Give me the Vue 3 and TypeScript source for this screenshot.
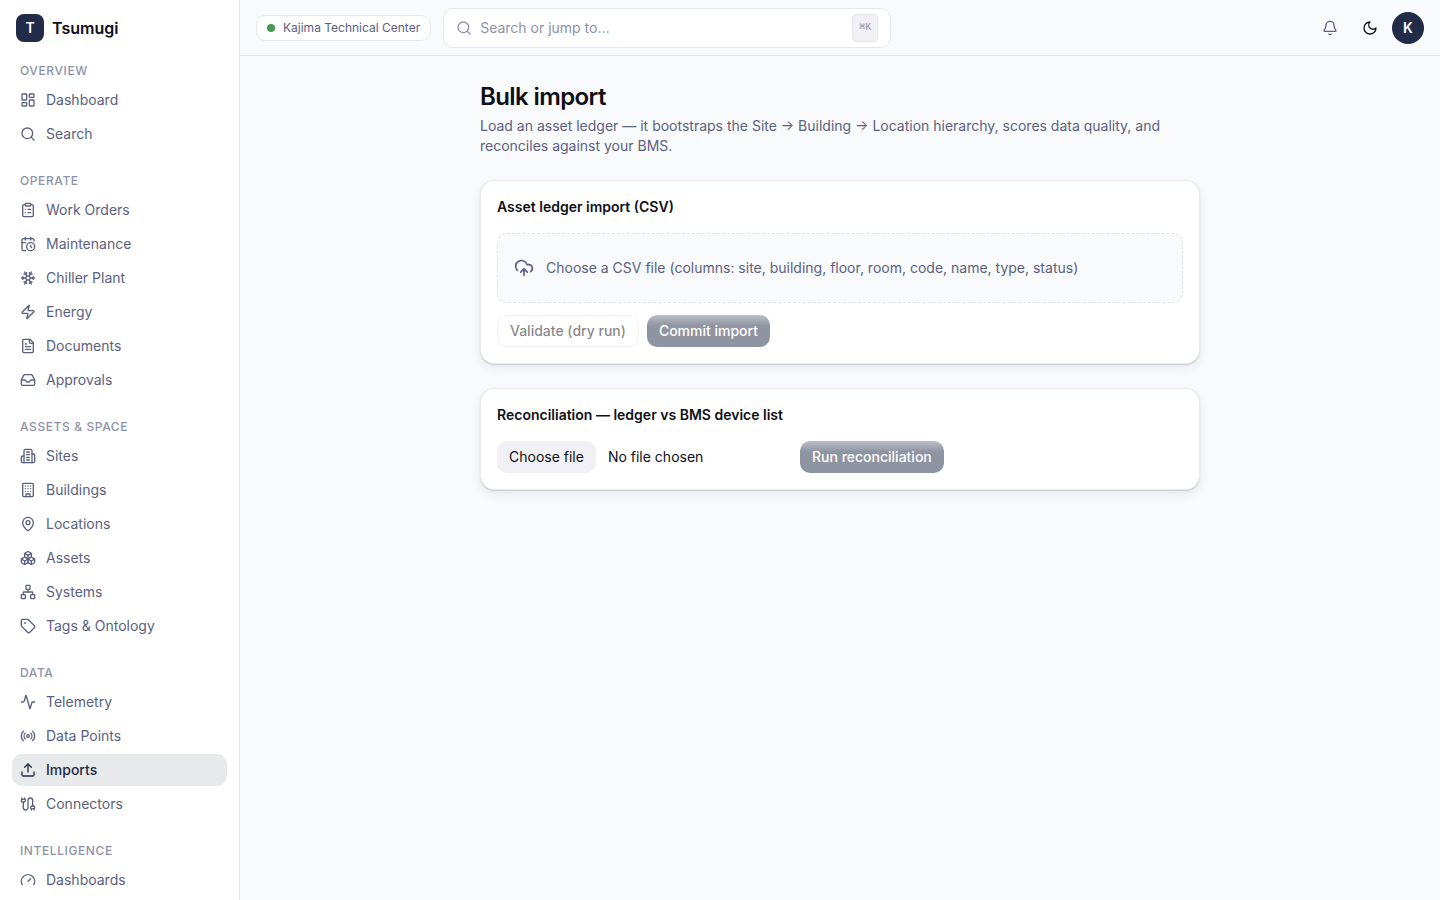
<script setup lang="ts">
import { ref } from 'vue'

interface NavItem {
  label: string
  icon: string
}
interface NavGroup {
  title: string
  items: NavItem[]
}

const groups: NavGroup[] = [
  {
    title: 'Overview',
    items: [
      { label: 'Dashboard', icon: 'dashboard' },
      { label: 'Search', icon: 'search' },
    ],
  },
  {
    title: 'Operate',
    items: [
      { label: 'Work Orders', icon: 'clipboard' },
      { label: 'Maintenance', icon: 'calendarClock' },
      { label: 'Chiller Plant', icon: 'snowflake' },
      { label: 'Energy', icon: 'zap' },
      { label: 'Documents', icon: 'fileText' },
      { label: 'Approvals', icon: 'inbox' },
    ],
  },
  {
    title: 'Assets & Space',
    items: [
      { label: 'Sites', icon: 'sites' },
      { label: 'Buildings', icon: 'building' },
      { label: 'Locations', icon: 'mapPin' },
      { label: 'Assets', icon: 'boxes' },
      { label: 'Systems', icon: 'network' },
      { label: 'Tags & Ontology', icon: 'tag' },
    ],
  },
  {
    title: 'Data',
    items: [
      { label: 'Telemetry', icon: 'activity' },
      { label: 'Data Points', icon: 'radio' },
      { label: 'Imports', icon: 'upload' },
      { label: 'Connectors', icon: 'cable' },
    ],
  },
  {
    title: 'Intelligence',
    items: [{ label: 'Dashboards', icon: 'gauge' }],
  },
]

const icons: Record<string, string[]> = {
  dashboard: [
    'M4 3h5a1 1 0 0 1 1 1v7a1 1 0 0 1-1 1H4a1 1 0 0 1-1-1V4a1 1 0 0 1 1-1z',
    'M15 3h5a1 1 0 0 1 1 1v3a1 1 0 0 1-1 1h-5a1 1 0 0 1-1-1V4a1 1 0 0 1 1-1z',
    'M15 12h5a1 1 0 0 1 1 1v7a1 1 0 0 1-1 1h-5a1 1 0 0 1-1-1v-7a1 1 0 0 1 1-1z',
    'M4 16h5a1 1 0 0 1 1 1v3a1 1 0 0 1-1 1H4a1 1 0 0 1-1-1v-3a1 1 0 0 1 1-1z',
  ],
  search: ['M19 11a8 8 0 1 1-16 0a8 8 0 1 1 16 0z', 'm21 21-4.34-4.34'],
  clipboard: [
    'M9 2h6a1 1 0 0 1 1 1v2a1 1 0 0 1-1 1H9a1 1 0 0 1-1-1V3a1 1 0 0 1 1-1z',
    'M16 4h2a2 2 0 0 1 2 2v14a2 2 0 0 1-2 2H6a2 2 0 0 1-2-2V6a2 2 0 0 1 2-2h2',
    'M12 11h4',
    'M12 16h4',
    'M8 11h.01',
    'M8 16h.01',
  ],
  calendarClock: [
    'M16 14v2.2l1.6 1',
    'M16 2v4',
    'M21 7.5V6a2 2 0 0 0-2-2H5a2 2 0 0 0-2 2v14a2 2 0 0 0 2 2h3.5',
    'M3 10h5',
    'M8 2v4',
    'M22 16a6 6 0 1 1-12 0a6 6 0 1 1 12 0z',
  ],
  snowflake: [
    'm10 20-1.25-2.5L6 18',
    'M10 4 8.75 6.5 6 6',
    'm14 20 1.25-2.5L18 18',
    'm14 4 1.25 2.5L18 6',
    'm17 21-3-6h-4',
    'm17 3-3 6 1.5 3',
    'M2 12h6.5L10 9',
    'm20 10-1.5 2 1.5 2',
    'M22 12h-6.5L14 15',
    'm4 10 1.5 2L4 14',
    'm7 21 3-6-1.5-3',
    'm7 3 3 6h4',
  ],
  zap: [
    'M4 14a1 1 0 0 1-.78-1.63l9.9-10.2a.5.5 0 0 1 .86.46l-1.92 6.02A1 1 0 0 0 13 10h7a1 1 0 0 1 .78 1.63l-9.9 10.2a.5.5 0 0 1-.86-.46l1.92-6.02A1 1 0 0 0 11 14z',
  ],
  fileText: [
    'M15 2H6a2 2 0 0 0-2 2v16a2 2 0 0 0 2 2h12a2 2 0 0 0 2-2V7Z',
    'M14 2v4a2 2 0 0 0 2 2h4',
    'M10 9H8',
    'M16 13H8',
    'M16 17H8',
  ],
  inbox: [
    'M22 12h-6l-2 3h-4l-2-3H2',
    'M5.45 5.11 2 12v6a2 2 0 0 0 2 2h16a2 2 0 0 0 2-2v-6l-3.45-6.89A2 2 0 0 0 16.76 4H7.24a2 2 0 0 0-1.79 1.11z',
  ],
  sites: [
    'M6 22V4a2 2 0 0 1 2-2h8a2 2 0 0 1 2 2v18Z',
    'M6 12H4a2 2 0 0 0-2 2v6a2 2 0 0 0 2 2h2',
    'M18 9h2a2 2 0 0 1 2 2v9a2 2 0 0 1-2 2h-2',
    'M10 6h4',
    'M10 10h4',
    'M10 14h4',
    'M10 18h4',
  ],
  building: [
    'M6 2h12a2 2 0 0 1 2 2v16a2 2 0 0 1-2 2H6a2 2 0 0 1-2-2V4a2 2 0 0 1 2-2z',
    'M9 22v-4h6v4',
    'M8 6h.01',
    'M16 6h.01',
    'M12 6h.01',
    'M12 10h.01',
    'M12 14h.01',
    'M16 10h.01',
    'M16 14h.01',
    'M8 10h.01',
    'M8 14h.01',
  ],
  mapPin: [
    'M20 10c0 4.993-5.539 10.193-7.399 11.799a1 1 0 0 1-1.202 0C9.539 20.193 4 14.993 4 10a8 8 0 0 1 16 0',
    'M15 10a3 3 0 1 1-6 0a3 3 0 1 1 6 0z',
  ],
  boxes: [
    'M2.97 12.92A2 2 0 0 0 2 14.63v3.24a2 2 0 0 0 .97 1.71l3 1.8a2 2 0 0 0 2.06 0L12 19v-5.5l-5-3-4.03 2.42Z',
    'm7 16.5-4.74-2.85',
    'm7 16.5 5-3',
    'M7 16.5v5.17',
    'M12 13.5V19l3.97 2.38a2 2 0 0 0 2.06 0l3-1.8a2 2 0 0 0 .97-1.71v-3.24a2 2 0 0 0-.97-1.71L17 10.5l-5 3Z',
    'm17 16.5-5-3',
    'm17 16.5 4.74-2.85',
    'M17 16.5v5.17',
    'M7.97 4.42A2 2 0 0 0 7 6.13v4.37l5 3 5-3V6.13a2 2 0 0 0-.97-1.71l-3-1.8a2 2 0 0 0-2.06 0l-3 1.8Z',
    'M12 8 7.26 5.15',
    'm12 8 4.74-2.85',
    'M12 13.5V8',
  ],
  network: [
    'M17 16h4a1 1 0 0 1 1 1v4a1 1 0 0 1-1 1h-4a1 1 0 0 1-1-1v-4a1 1 0 0 1 1-1z',
    'M3 16h4a1 1 0 0 1 1 1v4a1 1 0 0 1-1 1H3a1 1 0 0 1-1-1v-4a1 1 0 0 1 1-1z',
    'M10 2h4a1 1 0 0 1 1 1v4a1 1 0 0 1-1 1h-4a1 1 0 0 1-1-1V3a1 1 0 0 1 1-1z',
    'M5 16v-3a1 1 0 0 1 1-1h12a1 1 0 0 1 1 1v3',
    'M12 12V8',
  ],
  tag: [
    'M12.586 2.586A2 2 0 0 0 11.172 2H4a2 2 0 0 0-2 2v7.172a2 2 0 0 0 .586 1.414l8.704 8.704a2.426 2.426 0 0 0 3.42 0l6.58-6.58a2.426 2.426 0 0 0 0-3.42z',
    'M8 7.5a.5.5 0 1 1-1 0a.5.5 0 1 1 1 0z',
  ],
  activity: [
    'M22 12h-2.48a2 2 0 0 0-1.93 1.46l-2.35 8.36a.25.25 0 0 1-.48 0L9.24 2.18a.25.25 0 0 0-.48 0l-2.35 8.36A2 2 0 0 1 4.49 12H2',
  ],
  radio: [
    'M4.9 19.1C1 15.2 1 8.8 4.9 4.9',
    'M7.8 16.2c-2.3-2.3-2.3-6.1 0-8.5',
    'M14 12a2 2 0 1 1-4 0a2 2 0 1 1 4 0z',
    'M16.2 7.8c2.3 2.3 2.3 6.1 0 8.5',
    'M19.1 4.9C23 8.8 23 15.1 19.1 19',
  ],
  upload: ['M12 3v12', 'm17 8-5-5-5 5', 'M21 15v4a2 2 0 0 1-2 2H5a2 2 0 0 1-2-2v-4'],
  cable: [
    'M17 21v-2a1 1 0 0 1-1-1v-1a2 2 0 0 1 2-2h2a2 2 0 0 1 2 2v1a1 1 0 0 1-1 1',
    'M19 15V6.5a1 1 0 0 0-7 0v11a1 1 0 0 1-7 0V9',
    'M21 21v-2h-4',
    'M3 5h4V3',
    'M7 5a1 1 0 0 1 1 1v1a2 2 0 0 1-2 2H4a2 2 0 0 1-2-2V6a1 1 0 0 1 1-1V3',
  ],
  gauge: ['m12 14 4-4', 'M3.34 19a10 10 0 1 1 17.32 0'],
  bell: [
    'M10.268 21a2 2 0 0 0 3.464 0',
    'M3.262 15.326A1 1 0 0 0 4 17h16a1 1 0 0 0 .74-1.673C19.41 13.956 18 12.499 18 8A6 6 0 0 0 6 8c0 4.499-1.411 5.956-2.738 7.326',
  ],
  moon: ['M12 3a6 6 0 0 0 9 9 9 9 0 1 1-9-9Z'],
  cloudUpload: [
    'M12 13v8',
    'M4 14.899A7 7 0 1 1 15.71 8h1.79a4.5 4.5 0 0 1 2.5 8.242',
    'm8 17 4-4 4 4',
  ],
}

const activeItem = ref('Imports')
const query = ref('')
const deviceFile = ref('No file chosen')

function onDeviceFile(event: Event) {
  const files = (event.target as HTMLInputElement).files
  deviceFile.value = files?.[0]?.name ?? 'No file chosen'
}
</script>

<template>
  <div class="app">
    <aside class="sidebar">
      <div class="brand">
        <span class="brand-mark">T</span>
        <span class="brand-name">Tsumugi</span>
      </div>
      <nav class="nav" aria-label="Main">
        <section v-for="group in groups" :key="group.title" class="nav-group">
          <h2 class="nav-title">{{ group.title }}</h2>
          <a
            v-for="item in group.items"
            :key="item.label"
            href="#"
            class="nav-item"
            :class="{ active: item.label === activeItem }"
            @click.prevent="activeItem = item.label"
          >
            <svg class="icon" viewBox="0 0 24 24" aria-hidden="true">
              <path v-for="d in icons[item.icon]" :key="d" :d="d" />
            </svg>
            <span>{{ item.label }}</span>
          </a>
        </section>
      </nav>
    </aside>

    <div class="content">
      <header class="topbar">
        <button type="button" class="site-pill">
          <span class="dot"></span>
          Kajima Technical Center
        </button>
        <label class="search">
          <svg class="icon" viewBox="0 0 24 24" aria-hidden="true">
            <path v-for="d in icons.search" :key="d" :d="d" />
          </svg>
          <input v-model="query" type="text" placeholder="Search or jump to…" aria-label="Search or jump to" />
          <kbd>⌘K</kbd>
        </label>
        <div class="actions">
          <button type="button" class="icon-button muted" aria-label="Notifications">
            <svg class="icon" viewBox="0 0 24 24" aria-hidden="true">
              <path v-for="d in icons.bell" :key="d" :d="d" />
            </svg>
          </button>
          <button type="button" class="icon-button" aria-label="Toggle theme">
            <svg class="icon" viewBox="0 0 24 24" aria-hidden="true">
              <path v-for="d in icons.moon" :key="d" :d="d" />
            </svg>
          </button>
          <button type="button" class="avatar" aria-label="Account">K</button>
        </div>
      </header>

      <main class="main">
        <div class="page">
          <div class="page-head">
            <h1>Bulk import</h1>
            <p>
              Load an asset ledger — it bootstraps the Site → Building → Location hierarchy, scores
              data quality, and reconciles against your BMS.
            </p>
          </div>

          <section class="card">
            <h3>Asset ledger import (CSV)</h3>
            <label class="dropzone">
              <svg class="icon large" viewBox="0 0 24 24" aria-hidden="true">
                <path v-for="d in icons.cloudUpload" :key="d" :d="d" />
              </svg>
              <span>Choose a CSV file (columns: site, building, floor, room, code, name, type, status)</span>
              <input type="file" accept=".csv" class="visually-hidden" />
            </label>
            <div class="row">
              <button type="button" class="btn outline" disabled>Validate (dry run)</button>
              <button type="button" class="btn primary" disabled>Commit import</button>
            </div>
          </section>

          <section class="card">
            <h3>Reconciliation — ledger vs BMS device list</h3>
            <div class="row">
              <label class="file">
                <span class="file-button">Choose file</span>
                <span>{{ deviceFile }}</span>
                <input type="file" accept=".csv" class="visually-hidden" @change="onDeviceFile" />
              </label>
              <button type="button" class="btn primary" disabled>Run reconciliation</button>
            </div>
          </section>
        </div>
      </main>
    </div>
  </div>
</template>

<style>
body {
  margin: 0;
  background: #f9fafc;
}
</style>

<style scoped>
.app,
.app * {
  box-sizing: border-box;
}

.app {
  display: flex;
  height: 100vh;
  overflow: hidden;
  background: #f9fafc;
  color: #0e1016;
  font-family: Inter, 'Liberation Sans', sans-serif;
  font-size: 14px;
  line-height: 20px;
}

button,
input {
  font: inherit;
  color: inherit;
}

h1,
h2,
h3,
p {
  margin: 0;
}

.icon {
  flex: none;
  width: 16px;
  height: 16px;
  fill: none;
  stroke: currentColor;
  stroke-width: 2;
  stroke-linecap: round;
  stroke-linejoin: round;
}

.icon.large {
  width: 20px;
  height: 20px;
}

.sidebar {
  display: flex;
  flex: none;
  flex-direction: column;
  width: 240px;
  background: #ffffff;
  border-right: 1px solid #e4e5ea;
}

.brand {
  display: flex;
  flex: none;
  align-items: center;
  gap: 8px;
  height: 56px;
  padding: 0 16px;
}

.brand-mark {
  display: grid;
  place-items: center;
  width: 28px;
  height: 28px;
  border-radius: 8px;
  background: #222b47;
  color: #ffffff;
  font-weight: 600;
}

.brand-name {
  font-size: 16px;
  font-weight: 600;
  line-height: 24px;
}

.nav {
  display: flex;
  flex: 1;
  flex-direction: column;
  gap: 16px;
  min-height: 0;
  padding: 0 12px;
  overflow: hidden;
}

.nav-group {
  display: flex;
  flex: none;
  flex-direction: column;
  gap: 2px;
}

.nav-title {
  padding: 6px 8px 2px;
  color: #8d92a9;
  font-size: 12px;
  font-weight: 500;
  line-height: 18px;
  letter-spacing: 0.05em;
  text-transform: uppercase;
}

.nav-item {
  display: flex;
  align-items: center;
  gap: 10px;
  height: 32px;
  padding: 0 8px;
  border-radius: 10px;
  color: #5a6180;
  text-decoration: none;
}

.nav-item.active {
  background: #e8e9eb;
  color: #222b47;
  font-weight: 500;
}

.content {
  display: flex;
  flex: 1;
  flex-direction: column;
  min-width: 0;
}

.topbar {
  display: flex;
  flex: none;
  align-items: center;
  gap: 12px;
  height: 56px;
  padding: 0 16px;
  border-bottom: 1px solid #e4e5ea;
}

.site-pill {
  display: flex;
  flex: none;
  align-items: center;
  gap: 8px;
  padding: 4px 10px;
  border: 1px solid #e6e7ec;
  border-radius: 10px;
  background: #ffffff;
  color: #5a6180;
  font-size: 12px;
  line-height: 16px;
}

.dot {
  width: 8px;
  height: 8px;
  border-radius: 50%;
  background: #479a55;
}

.search {
  display: flex;
  flex: 1;
  align-items: center;
  gap: 8px;
  max-width: 448px;
  height: 40px;
  padding: 0 12px;
  border: 1px solid #e6e7ec;
  border-radius: 10px;
  background: #ffffff;
  color: #8d92a9;
}

.search input {
  flex: 1;
  min-width: 0;
  padding: 0;
  border: 0;
  outline: 0;
  background: transparent;
  color: #0e1016;
}

.search input::placeholder {
  color: #8d92a9;
  opacity: 1;
}

kbd {
  padding: 4px 6px;
  border: 1px solid #e6e7ec;
  border-radius: 4px;
  background: #f0f0f5;
  color: #8d92a9;
  font-family: 'Liberation Mono', monospace;
  font-size: 10px;
  line-height: 18px;
}

.actions {
  display: flex;
  align-items: center;
  gap: 4px;
  margin-left: auto;
}

.icon-button {
  display: grid;
  place-items: center;
  width: 36px;
  height: 36px;
  padding: 0;
  border: 0;
  border-radius: 10px;
  background: transparent;
}

.icon-button.muted {
  color: #5a6180;
}

.avatar {
  width: 32px;
  height: 32px;
  padding: 0;
  border: 0;
  border-radius: 50%;
  background: #222b47;
  color: #ffffff;
  font-weight: 600;
}

.main {
  flex: 1;
  min-height: 0;
  padding: 24px;
  overflow: auto;
}

.page {
  display: flex;
  flex-direction: column;
  gap: 24px;
  max-width: 720px;
  margin: 0 auto;
}

.page-head {
  display: flex;
  flex-direction: column;
  gap: 2px;
}

h1 {
  font-size: 24px;
  font-weight: 600;
  line-height: 34px;
  letter-spacing: -0.025em;
}

.page-head p {
  color: #5a6180;
}

.card {
  padding: 16px;
  border: 1px solid #e9eaee;
  border-radius: 14px;
  background: #ffffff;
  box-shadow:
    0 1px 1px rgba(34, 43, 71, 0.16),
    0 4px 12px rgba(34, 43, 71, 0.08);
}

.card h3 {
  margin-bottom: 16px;
  font-size: 14px;
  font-weight: 600;
  line-height: 20px;
}

.dropzone {
  position: relative;
  display: flex;
  align-items: center;
  gap: 12px;
  margin-bottom: 12px;
  padding: 24px 16px;
  border: 1px dashed #e0e2e8;
  border-radius: 10px;
  background: #f9fafc;
  color: #5a6180;
}

.visually-hidden {
  position: absolute;
  width: 1px;
  height: 1px;
  overflow: hidden;
  opacity: 0;
}

.row {
  display: flex;
  align-items: center;
  gap: 8px;
}

.btn {
  height: 32px;
  padding: 0 12px;
  border: 0;
  border-radius: 10px;
  font-weight: 500;
}

.btn:disabled {
  opacity: 0.5;
}

.btn.outline {
  border: 1px solid #e4e5ea;
  background: #ffffff;
}

.btn.primary {
  background: linear-gradient(rgba(255, 255, 255, 0.4), rgba(255, 255, 255, 0) 11px) #222b47;
  color: #ffffff;
}

.file {
  position: relative;
  display: flex;
  align-items: center;
  gap: 12px;
  width: 295px;
}

.file-button {
  padding: 6px 12px;
  border-radius: 10px;
  background: #f0f0f5;
}
</style>
